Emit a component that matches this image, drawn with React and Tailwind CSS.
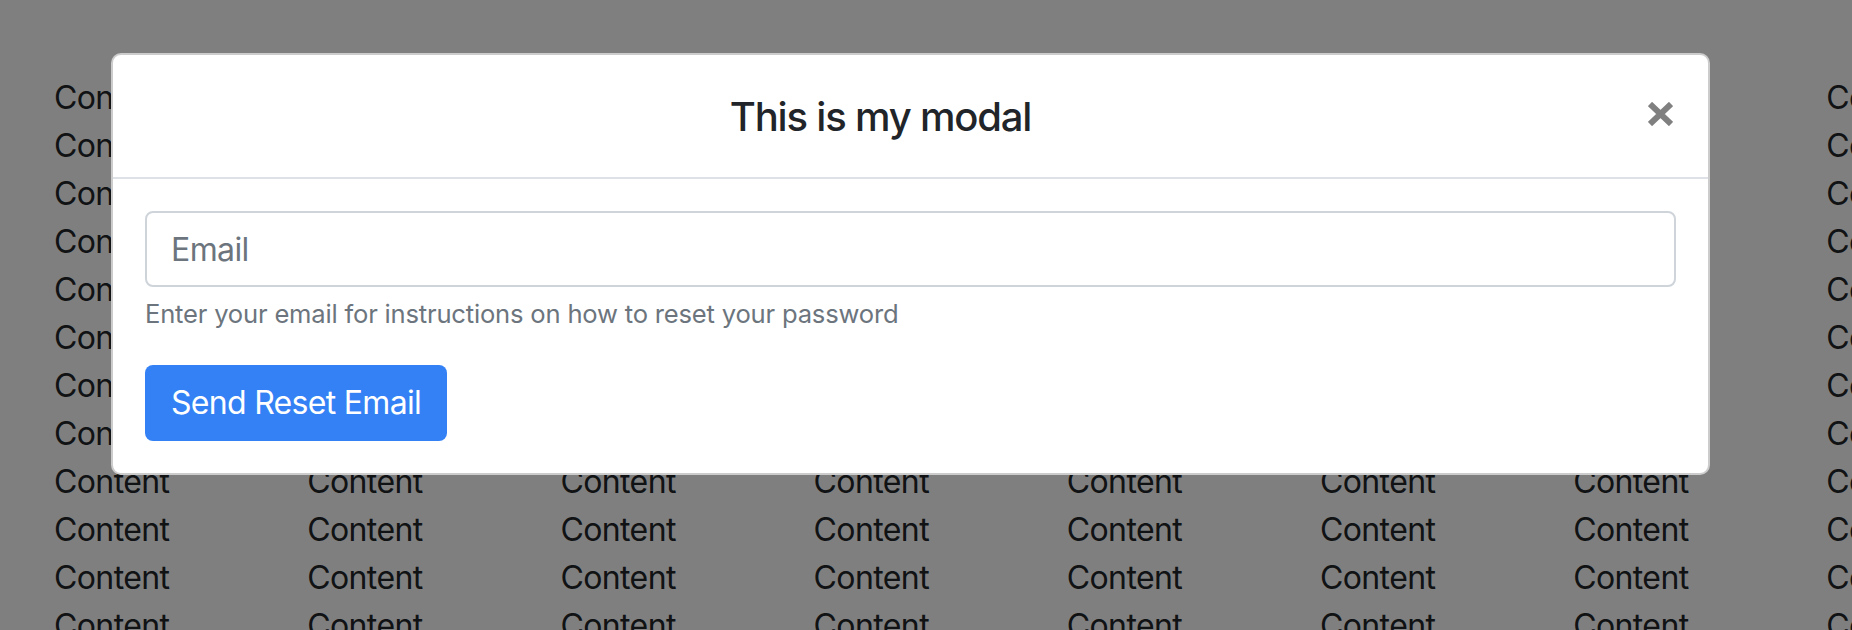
import React from "react";

const rows = Array.from({ length: 12 });
const cols = Array.from({ length: 8 });

export default function App() {
  return (
    <div
      className="relative h-[630px] w-[1852px] overflow-hidden bg-white text-[#212529]"
      style={{ fontFamily: 'Inter, "Liberation Sans", Roboto, sans-serif' }}
    >
      <div className="pl-[54px] pt-[74px]">
        {rows.map((_, r) => (
          <div key={r} className="flex">
            {cols.map((_, c) => (
              <div key={c} className="w-[253.2px] shrink-0 text-[32px] leading-[48px] tracking-[-0.6px]">
                Content
              </div>
            ))}
          </div>
        ))}
      </div>

      <div className="absolute inset-0 bg-black/50" />

      <div className="absolute left-[111px] top-[53px] w-[1599px] rounded-[10px] border-2 border-black/20 bg-white">
        <div className="flex border-b-2 border-[#dee2e6] pl-[32px] h-[124px]">
          <h5 className="flex-1 pt-[32px] text-center text-[40px] leading-[60px] font-medium tracking-[-1.2px] text-[#212529]">
            This is my modal
          </h5>
          <button className="w-[92px] shrink-0 pl-[32px] pt-[47px] self-start">
            <svg width="25" height="24" viewBox="0 0 25 24" className="block">
              <path d="M2 2 L23 22 M23 2 L2 22" stroke="#808080" strokeWidth="6" strokeLinecap="butt" />
            </svg>
          </button>
        </div>
        <div className="p-[32px]">
          <input
            type="email"
            placeholder="Email"
            className="block h-[76px] w-full rounded-[8px] border-2 border-[#ced4da] bg-white px-[24px] text-[32px] leading-[48px] tracking-[-0.6px] text-[#495057] placeholder:text-[#6c757d] outline-none"
          />
          <div className="mt-[8px] text-[25.6px] leading-[38.4px] tracking-[-0.2px] text-[#6c757d]">
            Enter your email for instructions on how to reset your password
          </div>
          <button className="mt-[32px] h-[76px] rounded-[8px] border-2 border-transparent bg-[#3381f5] px-[24px] text-[32px] leading-[48px] tracking-[-0.7px] text-white">
            Send Reset Email
          </button>
        </div>
      </div>
    </div>
  );
}
